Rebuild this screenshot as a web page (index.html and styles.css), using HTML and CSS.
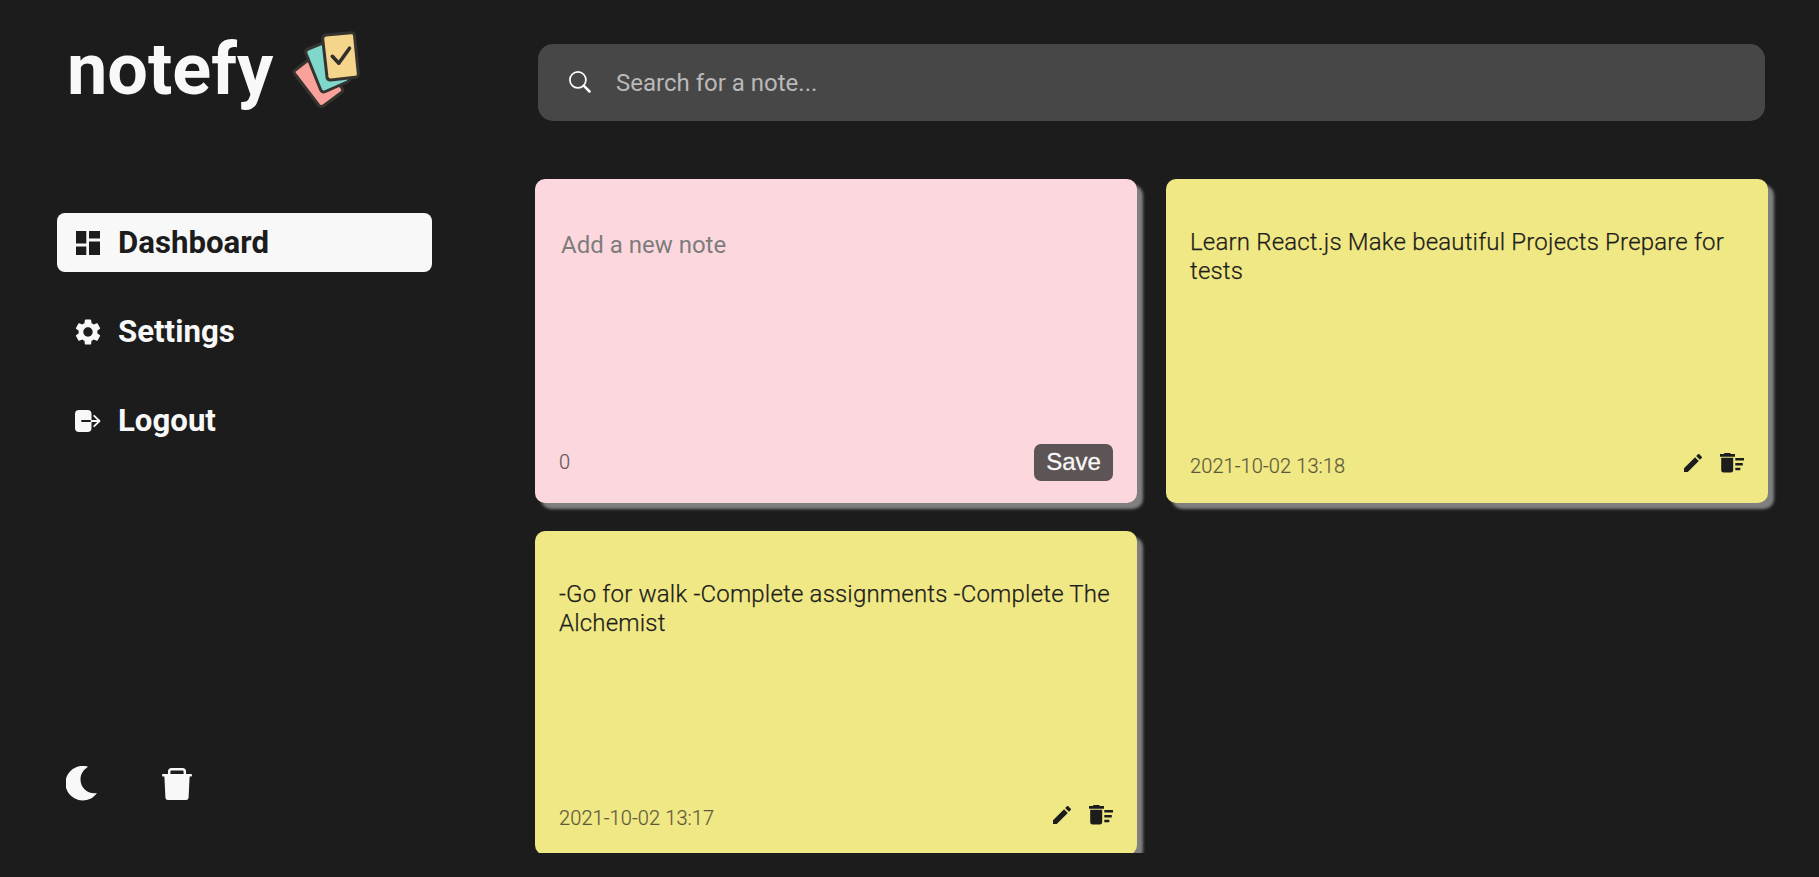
FILE: index.html
```html
<!DOCTYPE html>
<html lang="en">
<head>
<meta charset="utf-8">
<title>notefy</title>
<link rel="stylesheet" href="styles.css">
</head>
<body>
<div class="app">
  <aside class="sidebar">
    <div class="logo">
      <h1 class="logo-text">notefy</h1>
      <svg class="logo-mark" viewBox="0 0 70 78">
        <g stroke="#34332f" stroke-width="3" stroke-linejoin="round">
          <path d="M3.300 38L20 25Q23 23 25 25.500L50 56Q52 58.500 49.500 60.500L32 73.500Q29 76 26.500 73L2.800 42Q1 39.500 3.300 38Z" fill="#f9a19a"/>
          <path d="M16 17L32 10.500L59 45Q58 48.500 55 50L33.500 59.500Q30 61 28.500 57.500L14 21.500Q12.800 18.300 16 17Z" fill="#80d8cd"/>
          <path d="M34 3L59 .8Q62.300.5 62.600 4L66.300 41.500Q66.600 45 63 45.300L39 48Q35.500 48.300 35 45L30.700 7Q30.500 3.400 34 3Z" fill="#f5d58b"/>
        </g>
        <path d="M40.300 24.300L46.800 31.200L57.500 16.200" fill="none" stroke="#302f2b" stroke-width="3.600" stroke-linecap="round" stroke-linejoin="round"/>
      </svg>
    </div>
    <nav class="nav">
      <a class="nav-item active">
        <svg class="nav-icon" viewBox="0 0 24 24"><path fill="currentColor" d="M0 0h10.300v12.500H0zM13 0h11v7.500H13zM13 10.500h11V24H13zM0 15.500h10.300V24H0z"/></svg>
        <span>Dashboard</span>
      </a>
      <a class="nav-item">
        <svg class="nav-icon gear" viewBox="2 2 20 20"><path fill="currentColor" d="M19.140 12.940c.04-.3.060-.61.060-.94 0-.32-.02-.64-.07-.94l2.030-1.580c.18-.14.230-.41.120-.61l-1.920-3.320c-.12-.22-.37-.29-.59-.22l-2.390.96c-.5-.38-1.030-.7-1.620-.94l-.36-2.540c-.04-.24-.24-.41-.48-.41h-3.840c-.24 0-.43.17-.47.41l-.36 2.540c-.59.240-1.130.570-1.620.940l-2.390-.96c-.22-.08-.47 0-.59.220L2.740 8.870c-.12.210-.08.470.120.610l2.030 1.580c-.05.300-.09.630-.09.940s.02.640.070.940l-2.030 1.580c-.18.140-.23.410-.12.610l1.920 3.320c.12.220.370.290.590.220l2.390-.96c.5.380 1.030.700 1.620.940l.36 2.540c.05.240.240.410.480.410h3.840c.24 0 .44-.17.470-.41l.36-2.540c.59-.24 1.130-.56 1.620-.94l2.390.96c.22.080.470 0 .59-.22l1.920-3.320c.12-.22.070-.47-.12-.61l-2.010-1.580zM12 15.600c-1.980 0-3.600-1.620-3.600-3.600s1.620-3.600 3.600-3.600 3.600 1.620 3.600 3.600-1.620 3.600-3.600 3.600z"/></svg>
        <span>Settings</span>
      </a>
      <a class="nav-item">
        <svg class="nav-icon gear" viewBox="0 0 26 26"><rect x="0" y="2" width="16.500" height="22" rx="4" fill="currentColor"/><path d="M7 13h9.500" stroke="#1c1c1c" stroke-width="1.800" stroke-linecap="round"/><path d="M16.500 13H24M19.200 7.800L24.500 13L19.200 18.200" fill="none" stroke="currentColor" stroke-width="1.800" stroke-linecap="round" stroke-linejoin="round"/></svg>
        <span>Logout</span>
      </a>
    </nav>
    <div class="tools">
      <svg class="moon" viewBox="0 0 31 35"><path fill="currentColor" d="M22 .7A17.300 17.300 0 1 0 31 27C22 28.500 14.500 22 14.500 13.500C14.500 8 17.500 3.500 22 .7Z"/></svg>
      <svg class="trash" viewBox="0 0 30 32"><path d="M7.200 7V3.500Q7.200 1.200 9.500 1.200H20.500Q22.800 1.200 22.800 3.500V7" fill="none" stroke="currentColor" stroke-width="2.400"/><path fill="currentColor" d="M1 6h28q1 0 1 1.200T29 8.600H27.600L26.600 29.500Q26.500 32 24 32H6Q3.500 32 3.400 29.500L2.400 8.600H1Q0 8.500 0 7.200T1 6Z"/></svg>
    </div>
  </aside>
  <main class="content">
    <label class="search">
      <svg class="search-icon" viewBox="0 0 22 22" fill="none" stroke="#fff" stroke-linecap="round"><circle cx="8.900" cy="8.900" r="8" stroke-width="1.700"/><path d="M14.700 14.700L20.500 20.500" stroke-width="2.500"/></svg>
      <input class="search-input" type="text" placeholder="Search for a note...">
    </label>
    <section class="notes">
      <article class="note new">
        <textarea class="note-input" placeholder="Add a new note"></textarea>
        <footer class="note-footer"><small class="meta">0</small><button class="save">Save</button></footer>
      </article>
      <article class="note">
        <p class="note-text">Learn React.js Make beautiful Projects Prepare for tests</p>
        <footer class="note-footer">
          <small class="meta date">2021-10-02 13:18</small>
          <span class="actions">
            <svg class="pencil" viewBox="3 3 18 18"><path fill="currentColor" d="M3 17.250V21h3.750L17.810 9.940l-3.750-3.750L3 17.250zM20.710 7.040c.39-.39.390-1.020 0-1.410l-2.340-2.340c-.39-.39-1.020-.39-1.410 0l-1.830 1.830 3.750 3.750 1.830-1.830z"/></svg>
            <svg class="sweep" viewBox="0 0 24 20"><path fill="currentColor" d="M4.200 1V0h6.300v1H15v2.700H0V1zM1.200 4.800h12V17.200Q13.200 19.600 10.800 19.600H3.600Q1.200 19.600 1.200 17.200zM15.300 5H24v2.500h-8.700zM15.300 10h7.500v2.500h-7.500zM15.300 14.800h5v2.500h-5z"/></svg>
          </span>
        </footer>
      </article>
      <article class="note">
        <p class="note-text">-Go for walk -Complete assignments -Complete The Alchemist</p>
        <footer class="note-footer">
          <small class="meta date">2021-10-02 13:17</small>
          <span class="actions">
            <svg class="pencil" viewBox="3 3 18 18"><path fill="currentColor" d="M3 17.250V21h3.750L17.810 9.940l-3.750-3.750L3 17.250zM20.710 7.040c.39-.39.390-1.020 0-1.410l-2.340-2.340c-.39-.39-1.020-.39-1.410 0l-1.830 1.830 3.750 3.750 1.830-1.830z"/></svg>
            <svg class="sweep" viewBox="0 0 24 20"><path fill="currentColor" d="M4.200 1V0h6.300v1H15v2.700H0V1zM1.200 4.800h12V17.200Q13.200 19.600 10.800 19.600H3.600Q1.200 19.600 1.200 17.200zM15.300 5H24v2.500h-8.700zM15.300 10h7.500v2.500h-7.500zM15.300 14.800h5v2.500h-5z"/></svg>
          </span>
        </footer>
      </article>
    </section>
  </main>
</div>
</body>
</html>
```
FILE: styles.css
```css
* { box-sizing: border-box; margin: 0; padding: 0; }
body { background: #1c1c1c; color: #f8f8f8; font-family: Roboto, sans-serif; }
.app { display: flex; height: 877px; overflow: hidden; }

.sidebar { width: 535px; flex: none; display: flex; flex-direction: column; padding: 24px 103px 74px 57px; }
.logo { display: flex; height: 90px; padding-left: 10px; }
.logo-text { font-size: 72px; font-weight: 700; line-height: 91px; width: 225px; }
.logo-mark { width: 70px; height: 78px; margin-top: 8px; overflow: visible; }
.nav { margin-top: 99px; display: flex; flex-direction: column; gap: 30px; }
.nav-item { height: 59px; border-radius: 8px; display: flex; align-items: center; padding-left: 18px; font-size: 31.2px; font-weight: 700; }
.nav-item span { margin-left: 17px; padding-bottom: 1px; }
.nav-item.active { background: #f8f8f8; color: #1c1c1c; }
.nav-icon { width: 24px; height: 24px; margin: 0 1px; }
.nav-icon.gear { width: 26px; height: 26px; margin: 0; }
.tools { margin-top: auto; display: flex; align-items: flex-end; padding-left: 9px; gap: 65px; height: 40px; }
.moon { width: 31px; height: 35px; margin-bottom: 2px; }
.trash { width: 30px; height: 32px; margin-bottom: 3px; }

.content { width: 1260px; padding-top: 44px; height: 853px; display: flex; flex-direction: column; }
.search { width: 1227px; height: 77px; margin-left: 3px; flex: none; border-radius: 15px; background: #474747; display: flex; align-items: center; padding-left: 31px; }
.search-icon { width: 22px; height: 22px; margin: 0 25px 2px 0; }
.search-input { flex: 1; border: 0; outline: 0; background: none; color: #fff; font: 400 24px Roboto, sans-serif; }
.search-input::placeholder { color: #b9b9b9; }

.notes { flex: 1; min-height: 0; margin-top: 38px; padding-top: 20px; overflow: hidden; display: grid; grid-template-columns: 602px 602px; grid-auto-rows: 324px; column-gap: 29px; row-gap: 28px; }
.note { background: #f0e884; color: #1c1c1c; border-radius: 10px; box-shadow: 6px 6px 3px #808080; padding: 49px 24px 22px; display: flex; flex-direction: column; justify-content: space-between; }
.note.new { background: #fcd8de; }
.note-text { font-size: 24px; font-weight: 300; letter-spacing: .19px; line-height: 29px; -webkit-text-stroke: .25px #1c1c1c; }
.note-input { border: 0; outline: 0; resize: none; background: none; height: 180px; padding: 3px 2px; font: 400 24px/29px Roboto, sans-serif; }
.note-input::placeholder { color: #7c7c7c; }
.note-footer { display: flex; align-items: center; justify-content: space-between; height: 37px; }
.meta { font-size: 20px; font-weight: 300; letter-spacing: .1px; opacity: .7; padding-bottom: 1px; -webkit-text-stroke: .2px #1c1c1c; }
.meta.date { padding: 7px 0 0; }
.save { width: 79px; height: 37px; padding-bottom: 2px; border: 0; border-radius: 7px; background: #5c5455; color: #f8f8f8; font: 24px "Liberation Sans", Arial, sans-serif; -webkit-text-stroke: .3px #f8f8f8; }
.actions { display: flex; align-items: center; gap: 18px; }
.pencil { width: 18px; height: 18px; }
.sweep { width: 24px; height: 20px; }
```
